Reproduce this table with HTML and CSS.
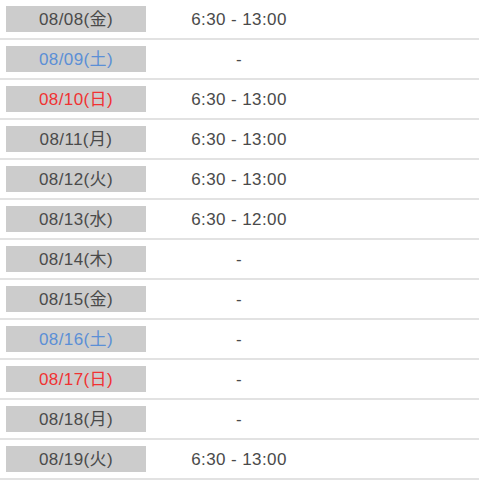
FILE: index.html
```html
<!DOCTYPE html>
<html lang="ja">
<head>
<meta charset="utf-8">
<link rel="stylesheet" href="styles.css">
</head>
<body>
<div class="list">
  <div class="row"><div class="date">08/08(金)</div><div class="time">6:30 - 13:00</div></div>
  <div class="row"><div class="date sat">08/09(土)</div><div class="time">-</div></div>
  <div class="row"><div class="date sun">08/10(日)</div><div class="time">6:30 - 13:00</div></div>
  <div class="row"><div class="date">08/11(月)</div><div class="time">6:30 - 13:00</div></div>
  <div class="row"><div class="date">08/12(火)</div><div class="time">6:30 - 13:00</div></div>
  <div class="row"><div class="date">08/13(水)</div><div class="time">6:30 - 12:00</div></div>
  <div class="row"><div class="date">08/14(木)</div><div class="time">-</div></div>
  <div class="row"><div class="date">08/15(金)</div><div class="time">-</div></div>
  <div class="row"><div class="date sat">08/16(土)</div><div class="time">-</div></div>
  <div class="row"><div class="date sun">08/17(日)</div><div class="time">-</div></div>
  <div class="row"><div class="date">08/18(月)</div><div class="time">-</div></div>
  <div class="row"><div class="date">08/19(火)</div><div class="time">6:30 - 13:00</div></div>
</div>
</body>
</html>
```
FILE: styles.css
```css
html, body {
  margin: 0;
  padding: 0;
  background: #fff;
}
body {
  font-family: "Liberation Sans", "Noto Sans CJK JP", sans-serif;
  font-size: 17px;
  letter-spacing: 0.4px;
  color: #4a4a4a;
}
.list {
  display: flex;
  flex-direction: column;
}
.row {
  display: flex;
  align-items: center;
  padding: 6px 0 6px 6px;
  border-bottom: 2px solid #e2e2e2;
}
.date {
  width: 140px;
  height: 26px;
  line-height: 28px;
  background: #cccccc;
  text-align: center;
}
.date.sat { color: #5b8fd6; }
.date.sun { color: #f03232; }
.time {
  width: 186px;
  padding-top: 1px;
  text-align: center;
}
```
